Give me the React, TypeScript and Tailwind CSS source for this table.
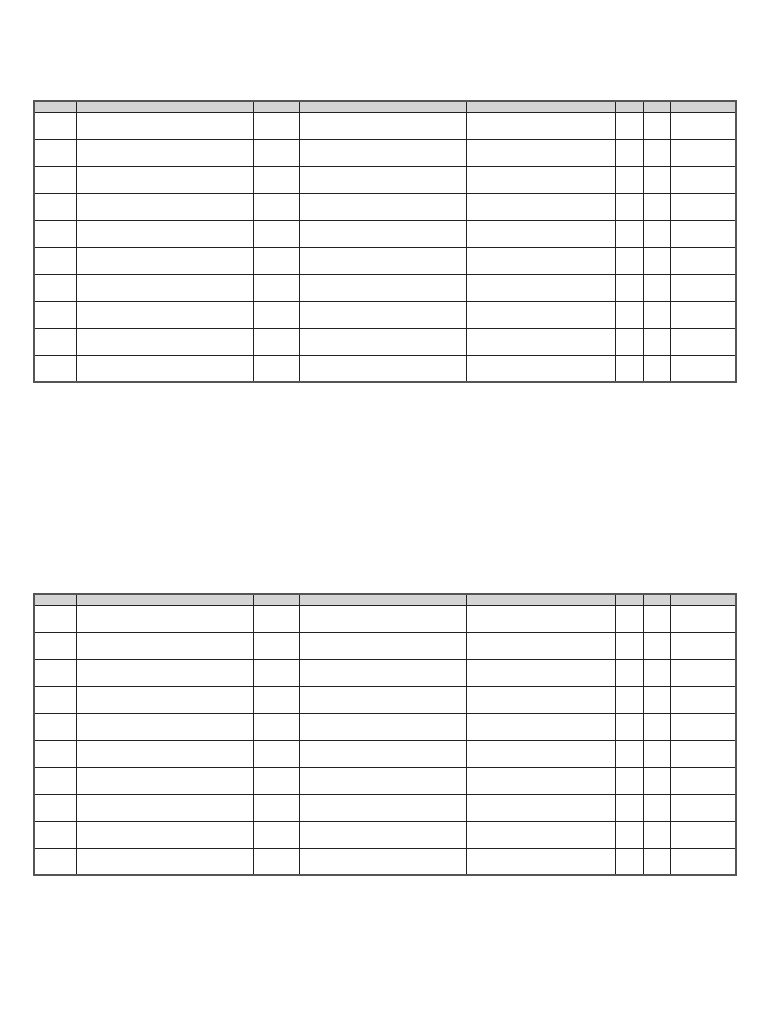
const widths = ["w-[42px]", "w-[177px]", "w-[46px]", "w-[167px]", "w-[149px]", "w-[28px]", "w-[27px]", "w-[66px]"];

function Sheet() {
  return (
    <table className="table-fixed border-collapse w-[701px] border-2 border-[#555]">
      <colgroup>
        {widths.map((w, i) => (
          <col key={i} className={w} />
        ))}
      </colgroup>
      <thead>
        <tr className="h-[11px] bg-[#d4d4d4]">
          {widths.map((_, i) => (
            <th key={i} className="border border-[#222] p-0" />
          ))}
        </tr>
      </thead>
      <tbody>
        {Array.from({ length: 10 }).map((_, r) => (
          <tr key={r} className="h-[27px]">
            {widths.map((_, i) => (
              <td key={i} className="border border-[#222] p-0" />
            ))}
          </tr>
        ))}
      </tbody>
    </table>
  );
}

export default function App() {
  return (
    <div className="w-[768px] h-[1024px] bg-white pl-[33px] pt-[100px] font-['Liberation_Sans',sans-serif]">
      <Sheet />
      <div className="h-[210px]" />
      <Sheet />
    </div>
  );
}
